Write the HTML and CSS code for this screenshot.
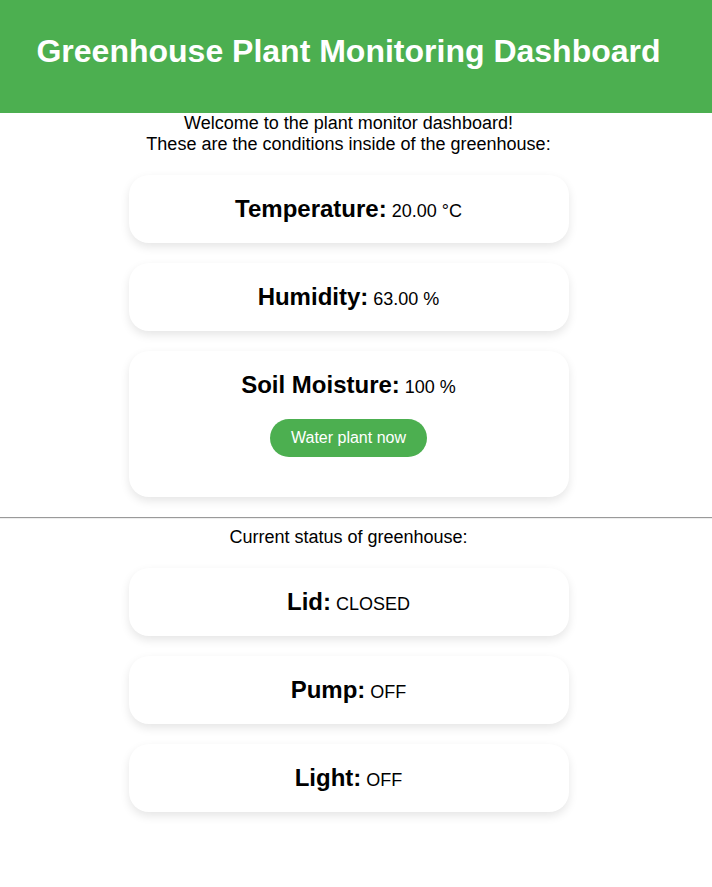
FILE: index.html
```html
<!DOCTYPE html>
<html>
<head>
<meta charset="utf-8">
<title>Greenhouse Plant Monitoring Dashboard</title>
<link rel="stylesheet" href="styles.css">
</head>
<body>
<header class="header">
  <h1 class="title">Greenhouse Plant Monitoring Dashboard</h1>
</header>
<main class="content">
  <p class="intro">Welcome to the plant monitor dashboard!<br>These are the conditions inside of the greenhouse:</p>
  <section class="cards">
    <div class="card"><span class="label">Temperature:</span><span class="value"> 20.00 °C</span></div>
    <div class="card"><span class="label">Humidity:</span><span class="value"> 63.00 %</span></div>
    <div class="card card-tall">
      <div><span class="label">Soil Moisture:</span><span class="value"> 100 %</span></div>
      <button class="btn">Water plant now</button>
    </div>
  </section>
</main>
<hr class="divider">
<main class="content">
  <p class="intro">Current status of greenhouse:</p>
  <section class="cards">
    <div class="card"><span class="label">Lid:</span><span class="value"> CLOSED</span></div>
    <div class="card"><span class="label">Pump:</span><span class="value"> OFF</span></div>
    <div class="card"><span class="label">Light:</span><span class="value"> OFF</span></div>
  </section>
</main>
</body>
</html>
```

FILE: styles.css
```css
html, body {
  margin: 0;
  padding: 0;
  background: #ffffff;
}
body {
  font-family: "Liberation Sans", Arial, sans-serif;
  color: #000;
}
.header {
  background: #4caf50;
  height: 113px;
  padding: 33px 15px 0 0;
  box-sizing: border-box;
  text-align: center;
}
.title {
  margin: 0;
  font-size: 32px;
  line-height: 37px;
  font-weight: bold;
  color: #ffffff;
}
.content {
  display: block;
  margin-right: 15px;
  text-align: center;
}
.intro {
  margin: 0;
  font-size: 18px;
  line-height: normal;
}
.cards {
  display: flex;
  flex-direction: column;
  align-items: center;
  gap: 20px;
  padding-top: 20px;
  padding-bottom: 20px;
}
.card {
  width: 400px;
  padding: 20px;
  background: #fff;
  border-radius: 20px;
  box-shadow: 0 4px 10px rgba(0, 0, 0, 0.1);
  font-size: 24px;
  line-height: 28px;
}
.label {
  font-weight: bold;
}
.value {
  font-size: 18px;
  line-height: 18px;
}
.card-tall {
  padding-bottom: 40px;
}
.btn {
  display: inline-block;
  margin-top: 20px;
  padding: 10px 21px;
  border: none;
  border-radius: 20px;
  background: #4caf50;
  color: #fff;
  font-family: "Liberation Sans", Arial, sans-serif;
  font-size: 16px;
  line-height: 18px;
}
.divider {
  margin: 0 0 8px 0;
  border: none;
  border-top: 1px solid #9a9a9a;
  border-bottom: 1px solid #eeeeee;
}
```
